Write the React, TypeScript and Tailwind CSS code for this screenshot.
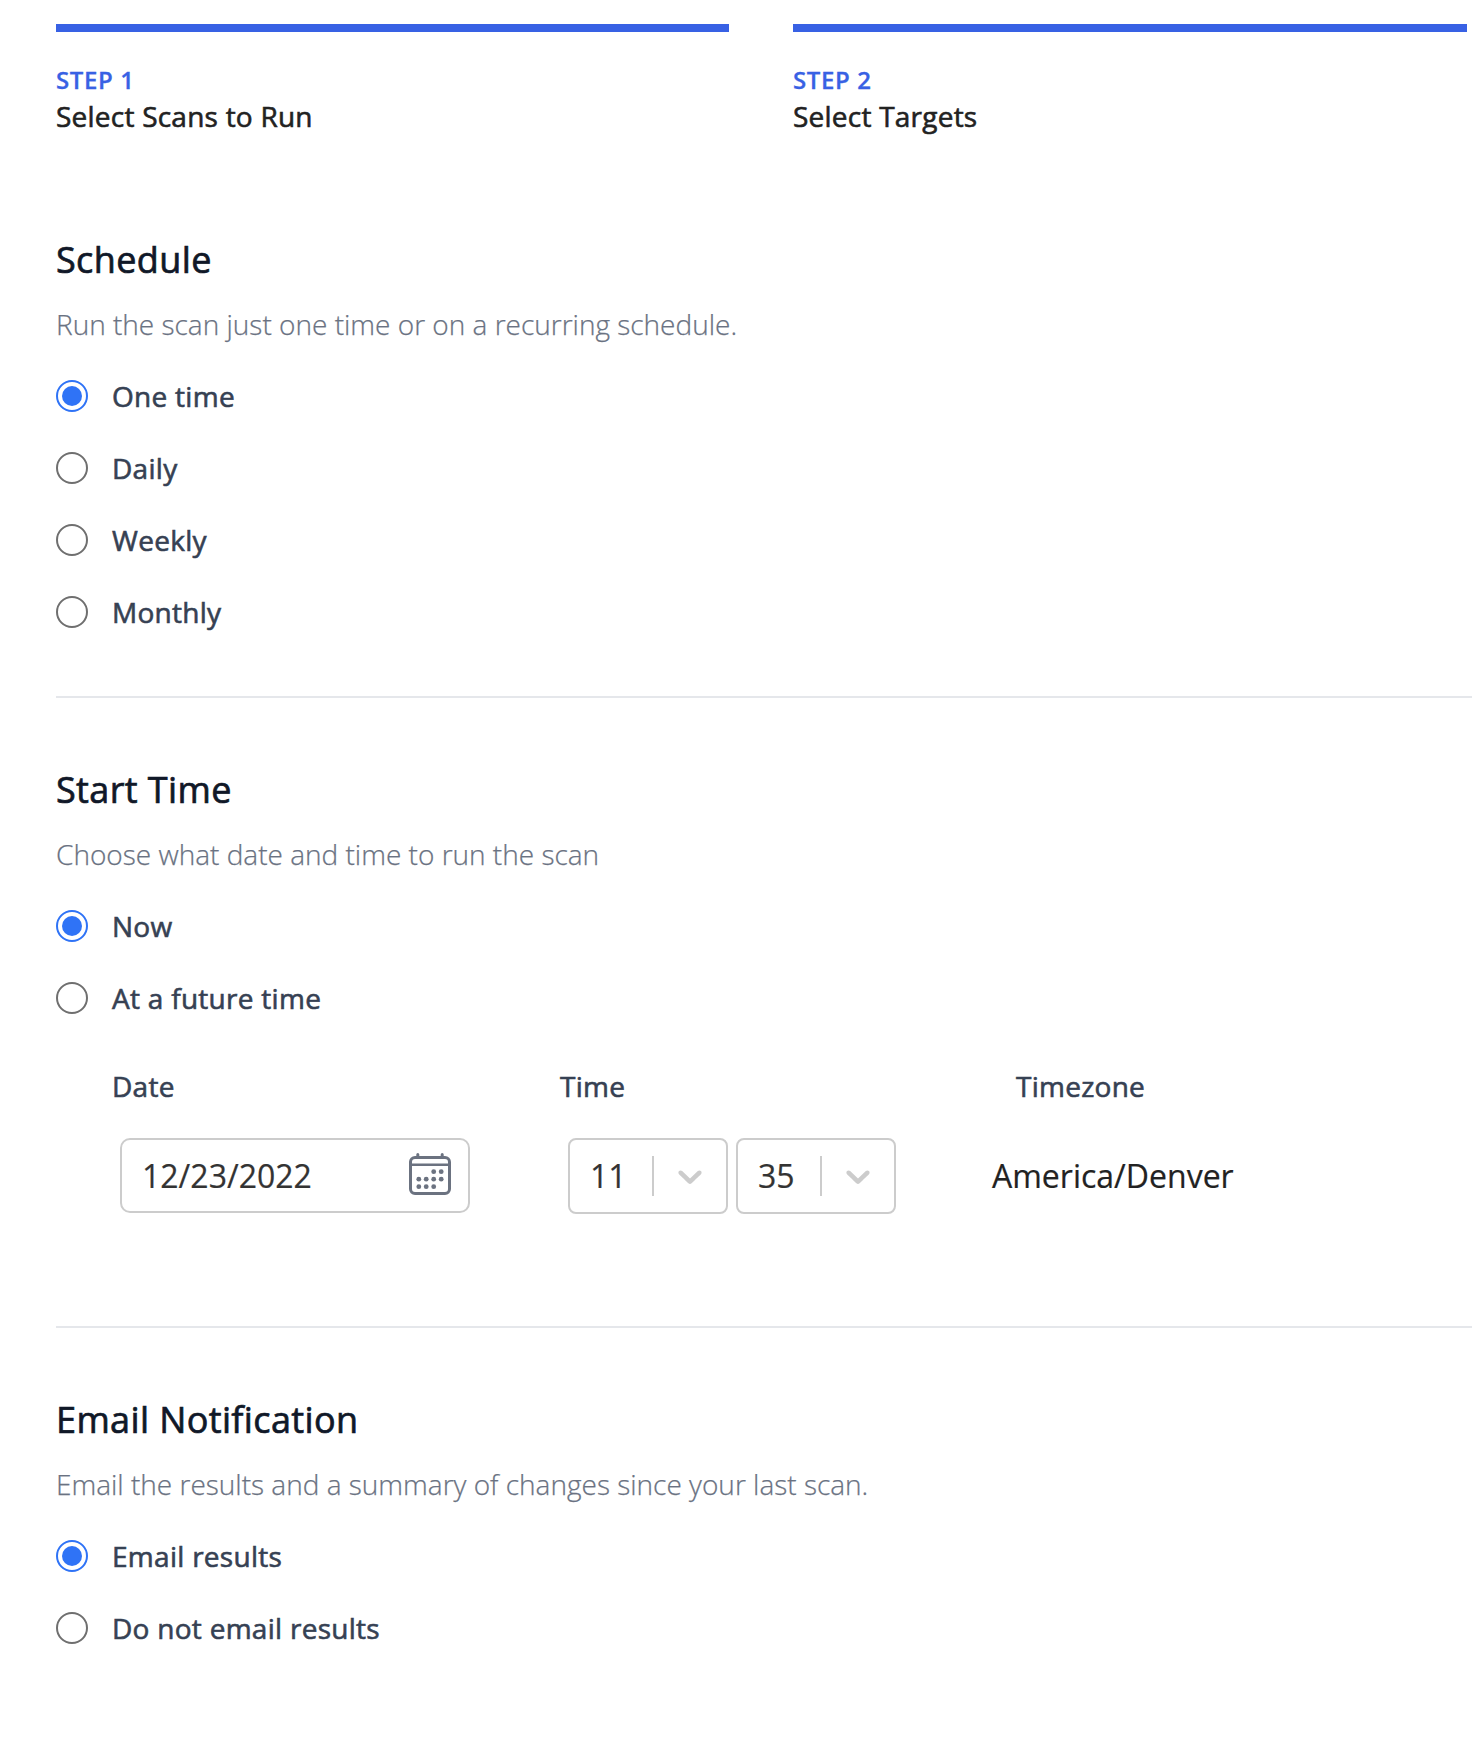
import React from "react";

function Radio({ label, checked, name }: { label: string; checked?: boolean; name: string }) {
  return (
    <label className="flex h-[72px] items-center">
      <input type="radio" name={name} defaultChecked={checked} className="peer sr-only" />
      <span className="flex size-8 items-center justify-center rounded-full border-2 border-[#6f6f6f] peer-checked:border-[#2f73f6] *:opacity-0 peer-checked:*:opacity-100">
        <span className="size-5 rounded-full bg-[#2f73f6]" />
      </span>
      <span className="ml-6 text-[28px] leading-[40px] font-medium tracking-[0.28px] text-gray-700 [-webkit-text-stroke:0.6px]">{label}</span>
    </label>
  );
}

function Heading({ title, text }: { title: string; text: string }) {
  return (
    <>
      <h2 className="text-[36px] leading-[48px] font-medium tracking-[0.38px] text-gray-900 [-webkit-text-stroke:0.7px]">{title}</h2>
      <p className="mt-5 mb-4 text-[28px] leading-[40px] font-light text-gray-500 [-webkit-text-stroke:0.25px]">{text}</p>
    </>
  );
}

function Step({ n, title }: { n: string; title: string }) {
  return (
    <div className="border-t-8 border-[#3861e4] pt-8">
      <div className="text-[24px] leading-[32px] font-semibold tracking-[0.6px] text-[#3861e4] [-webkit-text-stroke:0.3px]">{n}</div>
      <div className="mt-1 text-[28px] leading-[32px] font-medium tracking-[0.23px] text-[#222222] [-webkit-text-stroke:0.6px]">{title}</div>
    </div>
  );
}

function Select({ value }: { value: string }) {
  return (
    <div className="flex h-[76px] w-[160px] items-center rounded-lg border-2 border-[#cccccc]">
      <span className="w-[82px] pl-5 text-[32px]">{value}</span>
      <span className="h-10 w-0.5 bg-[#cccccc]" />
      <svg viewBox="0 0 20 20" className="ml-4 size-10 fill-[#cccccc]">
        <path d="M4.516 7.548c0.436-0.446 1.043-0.481 1.576 0l3.908 3.747 3.908-3.747c0.533-0.481 1.141-0.446 1.574 0 0.436 0.445 0.408 1.197 0 1.615-0.406 0.418-4.695 4.502-4.695 4.502-0.217 0.223-0.502 0.335-0.787 0.335s-0.57-0.112-0.789-0.335c0 0-4.287-4.084-4.695-4.502s-0.436-1.17 0-1.615z" />
      </svg>
    </div>
  );
}

const calendarDots = [
  [25.7, 19.7], [33.2, 19.7],
  [10.8, 27.2], [18.2, 27.2], [25.7, 27.2], [33.2, 27.2],
  [10.8, 34.7], [18.2, 34.7], [25.7, 34.7],
];

function CalendarIcon() {
  return (
    <svg viewBox="0 0 44 44" className="mb-[3px] size-11" fill="none" stroke="#6b7280">
      <rect x="2.5" y="5.5" width="39" height="36" rx="4.5" strokeWidth="3" />
      <path d="M2 12.8h40" strokeWidth="2.6" />
      <path d="M9.8 2.4v3M34.2 2.4v3" strokeWidth="3" strokeLinecap="round" />
      {calendarDots.map(([x, y]) => (
        <circle key={`${x}-${y}`} cx={x} cy={y} r="2.4" fill="#6b7280" stroke="none" />
      ))}
    </svg>
  );
}

export default function App() {
  return (
    <main className="h-[1742px] overflow-hidden bg-white pt-6 pl-14 font-['Open_Sans',sans-serif] text-gray-900">
      <div className="mr-[5px] grid h-[212px] grid-cols-[673px_1fr] gap-16">
        <Step n="STEP 1" title="Select Scans to Run" />
        <Step n="STEP 2" title="Select Targets" />
      </div>
      <section className="h-[462px] border-b-2 border-gray-200">
        <Heading title="Schedule" text="Run the scan just one time or on a recurring schedule." />
        <Radio name="schedule" label="One time" checked />
        <Radio name="schedule" label="Daily" />
        <Radio name="schedule" label="Weekly" />
        <Radio name="schedule" label="Monthly" />
      </section>
      <section className="h-[630px] border-b-2 border-gray-200 pt-[68px]">
        <Heading title="Start Time" text="Choose what date and time to run the scan" />
        <Radio name="start" label="Now" checked />
        <Radio name="start" label="At a future time" />
        <div className="mt-[32px] ml-14 grid grid-cols-[448px_456px_1fr] text-[28px] leading-[40px] font-medium tracking-[0.26px] text-gray-700 [-webkit-text-stroke:0.6px]">
          <span>Date</span>
          <span>Time</span>
          <span>Timezone</span>
        </div>
        <div className="mt-8 ml-16 flex items-start text-[32px] leading-[48px] text-[#333333] [-webkit-text-stroke:0.2px]">
          <div className="flex h-[75px] w-[350px] items-center justify-between rounded-[10px] border-2 border-[#cccccc] pr-4 pl-5">
            <span className="pt-px">12/23/2022</span>
            <CalendarIcon />
          </div>
          <div className="ml-[98px] flex gap-2">
            <Select value="11" />
            <Select value="35" />
          </div>
          <span className="ml-24 self-center text-[#222222]">America/Denver</span>
        </div>
      </section>
      <section className="pt-[68px]">
        <Heading title="Email Notification" text="Email the results and a summary of changes since your last scan." />
        <Radio name="email" label="Email results" checked />
        <Radio name="email" label="Do not email results" />
      </section>
    </main>
  );
}
